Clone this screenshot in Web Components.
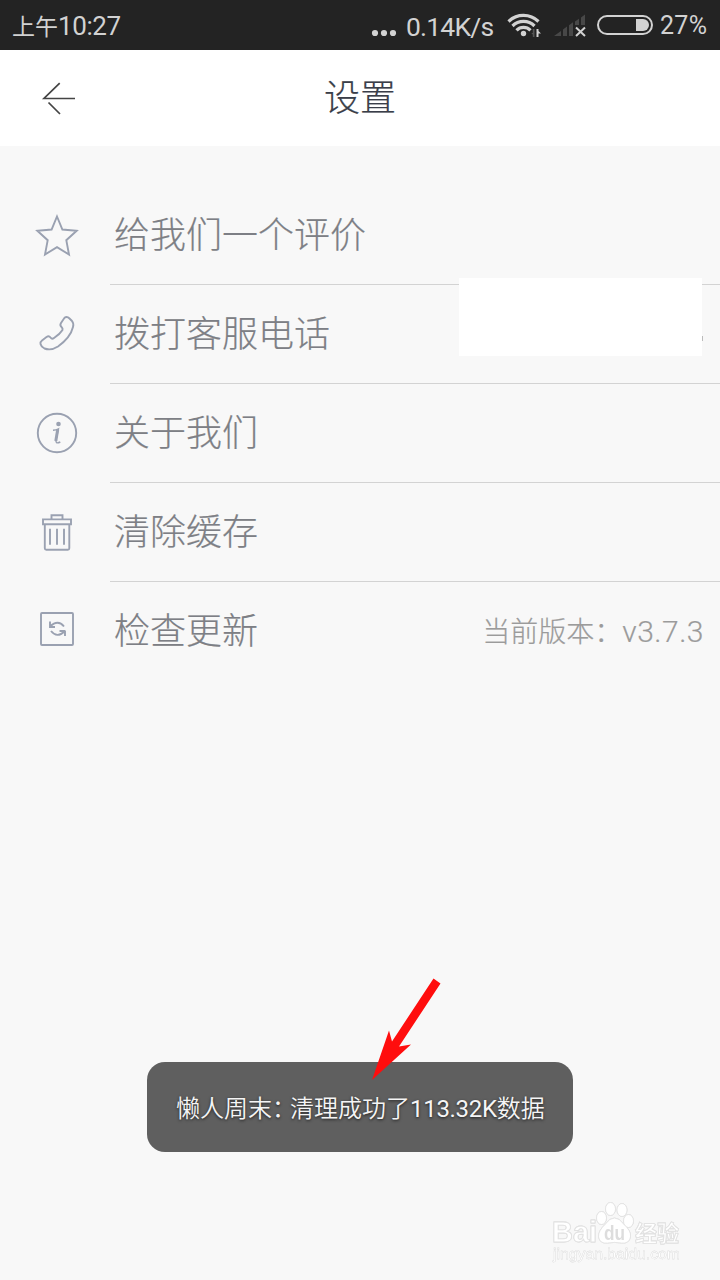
<!DOCTYPE html>
<html lang="zh-CN">
<head>
<meta charset="utf-8">
<title>设置</title>
<style>
    html, body{
        margin: 0;
        height: 100%;
        overflow: hidden;
        background: #f8f8f8;
    }
    body{
        font-family: Roboto, "Noto Sans CJK SC", sans-serif;
    }
</style>
</head>
<body>
<settings-screen></settings-screen>
<script>
class StatusBar extends HTMLElement{
    constructor(){
        super();
        this._root = this.attachShadow({mode: 'open'});
    }
    connectedCallback(){
        this._root.innerHTML = `
            <style>
                :host{
                    display: flex;
                    box-sizing: border-box;
                    height: 50px;
                    padding: 0 13px 0 12px;
                    align-items: center;
                    justify-content: space-between;
                    background: #232323;
                    color: #d2d2d2;
                    font: 26px/53px Roboto, "Noto Sans CJK SC", sans-serif;
                }
                .time, .speed, .level{
                    white-space: nowrap;
                    height: 50px;
                }
                .time{ font-size: 23px; }
                .time span{ font-size: 26px; letter-spacing: -0.4px; }
                .right{ display: flex; align-items: center; }
                .speed{ width: 101px; font-size: 26.5px; letter-spacing: -0.8px; }
                .level{ width: 47px; font-size: 25px; letter-spacing: 0.3px; line-height: 51px; }
                svg{ display: block; flex: none; }
            </style>
            <div class="time">上午<span>10:27</span></div>
            <div class="right">
                <svg width="35" height="50" fill="#d2d2d2">
                    <circle cx="4" cy="33" r="3.1"/><circle cx="13" cy="33" r="3.1"/><circle cx="22" cy="33" r="3.1"/>
                </svg>
                <div class="speed">0.14K/s</div>
                <svg width="153" height="50" viewBox="507 0 153 50">
                    <g fill="none" stroke="#d2d2d2" stroke-width="3.2">
                        <path d="M508.500 21.500a21.500 21.500 0 0 1 30 0"/>
                        <path d="M512.500 26a15.500 15.500 0 0 1 22 0"/>
                        <path d="M516.500 30.300a9.800 9.800 0 0 1 14 0"/>
                    </g>
                    <circle cx="523.500" cy="33.500" r="2.700" fill="#d2d2d2"/>
                    <path d="M536.500 29h2v2l2.500 2.500h-2.500V37h-2z" fill="#d2d2d2"/>
                    <path d="M534.500 29v8h-1.700v-2.500l-1.500-1.500h1.500v-4z" fill="#555"/>
                    <path d="M554 36l7-5v5zM563 29.500l4-3V36h-4zM569 25.300l4-3V36h-4zM575 21.500l4-2.800V25h-4zM581 17.500l4-3V25h-4z" fill="#484848"/>
                    <path d="M576 27.500l9 8.500M585 27.500l-9 8.500" stroke="#d2d2d2" stroke-width="2"/>
                    <rect x="598" y="16" width="54" height="18" rx="9" fill="none" stroke="#d2d2d2" stroke-width="2"/>
                    <path d="M636 19h7a6 6 0 0 1 0 12h-7z" fill="#d2d2d2"/>
                </svg>
                <div class="level">27%</div>
            </div>
        `;
    }
}

class TitleBar extends HTMLElement{
    constructor(){
        super();
        this._root = this.attachShadow({mode: 'open'});
    }
    connectedCallback(){
        this._root.innerHTML = `
            <style>
                :host{
                    display: grid;
                    grid-template-columns: 120px 1fr 120px;
                    height: 96px;
                    background: #fff;
                    color: #3a3e49;
                    text-align: center;
                    font-size: 36px;
                    font-weight: 300;
                    line-height: 99px;
                    -webkit-text-stroke: .2px;
                }
            </style>
            <svg width="120" height="96" fill="none" stroke="#444" stroke-width="1.7">
                <path d="M75 48.500H44L59.700 33.200M48.500 52.500L60 64"/>
            </svg>
            <slot></slot>
        `;
    }
}

const ICONS = {
    star: '<path d="M57 216.500l5.400 13 14.300 1.300-10.400 9.400 2.700 14.300-12-7.300-12 7.300 2.700-14.300-10.400-9.400 14.300-1.300z" transform="translate(0 -186)"/>',
    phone: '<path d="M64.500 32.300Q67 30.500 69.500 33L72 35.500Q74 38 73 41.500Q70.500 52 58 61Q51 65.500 44.500 63Q41 61 40.500 58.500Q40 56.500 42 55L46.500 51.500Q49 50 50.500 52Q52 54 54 52.500Q60 48.500 62.500 44.500Q63 43 61.500 41.500Q59.500 39.800 61 37.500Z" transform="translate(0 .5)"/>',
    info: '<circle cx="57" cy="49" r="19.200"/><circle cx="58.500" cy="40" r="2.300" fill="#9aa1b1" stroke="none"/><path d="M53 46.200Q56 46 58.500 44.800L56 56Q55.300 60.500 60.300 58" stroke-width="1.400"/><path d="M57.700 45.500L55.800 57" stroke-width="3"/>',
    trash: '<path d="M44.800 40.500V64q0 1.500 1.500 1.500h21.500q1.500 0 1.500-1.500V40.500M43 35.200h28v4.800H43zM51.500 34.500v-3.500h11V34.500M50 44.500v16M57 44.500v16M64 44.500v16" transform="translate(0 1.200)"/>',
    update: '<rect x="41" y="31" width="32" height="32" rx="1"/><path d="M50 44.500q8-7.500 14 0M50 39.500v5.500h5M65 49h-5.500M65 48.500V54M64.500 49.500q-7.500 7-13.500-.5"/>'
};

class SettingItem extends HTMLElement{
    constructor(){
        super();
        this._root = this.attachShadow({mode: 'open'});
    }
    connectedCallback(){
        this._root.innerHTML = `
            <style>
                :host{
                    display: flex;
                    height: 99px;
                    color: #7d7f85;
                    font-size: 36px;
                    font-weight: 300;
                    line-height: 100px;
                }
                svg{ flex: none; }
                .body{
                    display: flex;
                    box-sizing: border-box;
                    flex: 1;
                    padding: 0 16px 0 4px;
                    justify-content: space-between;
                    border-bottom: 1px solid #d3d3d3;
                    white-space: nowrap;
                    -webkit-text-stroke: .2px;
                }
                :host([last]) .body{ border-color: transparent; }
                ::slotted([slot=value]){
                    color: #9b9b9b;
                    font-size: 28px;
                }
            </style>
            <svg width="110" height="99" fill="none" stroke="#9aa1b1" stroke-width="1.9">${ICONS[this.getAttribute('icon')]}</svg>
            <div class="body"><slot></slot><slot name="value"></slot></div>
        `;
    }
}

class PhoneMask extends HTMLElement{
    constructor(){
        super();
        this._root = this.attachShadow({mode: 'open'});
    }
    connectedCallback(){
        // sits over the divider above it
        this._root.innerHTML = `
            <style>
                :host{ display: block; position: relative; width: 243px; margin-right: 2px; }
                .cover{ position: absolute; left: 0; top: -7px; width: 243px; height: 78px; background: #fff; }
                .rest{ position: absolute; left: 243px; top: 51px; width: 1px; height: 5px; background: #bbb; }
            </style>
            <div class="cover"></div><div class="rest"></div>
        `;
    }
}

class ToastMessage extends HTMLElement{
    constructor(){
        super();
        this._root = this.attachShadow({mode: 'open'});
    }
    connectedCallback(){
        this._root.innerHTML = `
            <style>
                :host{
                    position: absolute;
                    left: 147px;
                    top: 1062px;
                    box-sizing: border-box;
                    width: 426px;
                    height: 90px;
                    padding-left: 29px;
                    border-radius: 18px;
                    background: #5f5f5f;
                    color: #f5f5f5;
                    font-size: 24px;
                    font-weight: 350;
                    line-height: 94px;
                    white-space: nowrap;
                    text-shadow: 0 1px 3px rgba(0,0,0,.7);
                }
                svg{ position: absolute; left: 222px; top: -86px; overflow: visible; }
            </style>
            <slot></slot>
            <svg width="75" height="105" viewBox="369 976 75 105">
                <path d="M433.500 978.500l7 5-41.500 63 12-2-39 35.500 17-49.500 3 11z" fill="#ff0d0d"/>
            </svg>
        `;
    }
}

class BaiduMark extends HTMLElement{
    constructor(){
        super();
        this._root = this.attachShadow({mode: 'open'});
    }
    connectedCallback(){
        this._root.innerHTML = `
            <style>
                :host{ position: absolute; left: 545px; top: 1195px; }
                svg{ display: block; filter: drop-shadow(0 0 .5px #d8d8d8); }
                text{ font-family: "Liberation Sans", "Noto Sans CJK SC", sans-serif; }
            </style>
            <svg width="150" height="75" viewBox="545 1195 150 75" fill="#fff" stroke="#e2e2e2" stroke-width=".8">
                <text x="552" y="1242" font-size="29" font-weight="bold" textLength="45" lengthAdjust="spacingAndGlyphs">Bai</text>
                <ellipse cx="601.500" cy="1218" rx="5" ry="6.500"/>
                <ellipse cx="610.500" cy="1209" rx="5" ry="6.500"/>
                <ellipse cx="622" cy="1210" rx="5" ry="6.500"/>
                <ellipse cx="628.500" cy="1221" rx="5" ry="6.500"/>
                <path d="M614.500 1218q5 0 9 6 8 7 7 13-1.500 7-9 6-7-1.200-14 0-7.500 1-9-6-.5-6 7-13 4-6 9-6z"/>
                <text x="604" y="1240" font-size="20" fill="#ddd" stroke="none" font-weight="bold" textLength="21" lengthAdjust="spacingAndGlyphs">du</text>
                <text x="635" y="1241" font-size="22" font-weight="bold" textLength="44">经验</text>
                <text x="553" y="1259" font-size="15" stroke-width=".3" textLength="127" lengthAdjust="spacingAndGlyphs">jingyan.baidu.com</text>
            </svg>
        `;
    }
}

class SettingsScreen extends HTMLElement{
    constructor(){
        super();
        this._root = this.attachShadow({mode: 'open'});
    }
    connectedCallback(){
        this._root.innerHTML = `
            <style>
                :host{
                    display: block;
                    position: relative;
                    width: 720px;
                    height: 1280px;
                    overflow: hidden;
                    background: #f8f8f8;
                }
                .list{ padding-top: 40px; }
                .num{ font-weight: 400; letter-spacing: -0.3px; }
                .colon{ letter-spacing: -6px; }
                .version{ font-size: 30px; letter-spacing: 0.5px; }
            </style>
            <status-bar></status-bar>
            <title-bar><span>设置</span></title-bar>
            <div class="list">
                <setting-item icon="star"><span>给我们一个评价</span></setting-item>
                <setting-item icon="phone"><span>拨打客服电话</span><phone-mask slot="value"></phone-mask></setting-item>
                <setting-item icon="info"><span>关于我们</span></setting-item>
                <setting-item icon="trash"><span>清除缓存</span></setting-item>
                <setting-item icon="update" last><span>检查更新</span><span slot="value">当前版本：<span class="version">v3.7.3</span></span></setting-item>
            </div>
            <toast-message>懒人周末<span class="colon">：</span>清理成功了<span class="num">113.32K</span>数据</toast-message>
            <baidu-mark></baidu-mark>
        `;
    }
}

window.customElements.define('status-bar', StatusBar);
window.customElements.define('title-bar', TitleBar);
window.customElements.define('setting-item', SettingItem);
window.customElements.define('phone-mask', PhoneMask);
window.customElements.define('toast-message', ToastMessage);
window.customElements.define('baidu-mark', BaiduMark);
window.customElements.define('settings-screen', SettingsScreen);
</script>
</body>
</html>
